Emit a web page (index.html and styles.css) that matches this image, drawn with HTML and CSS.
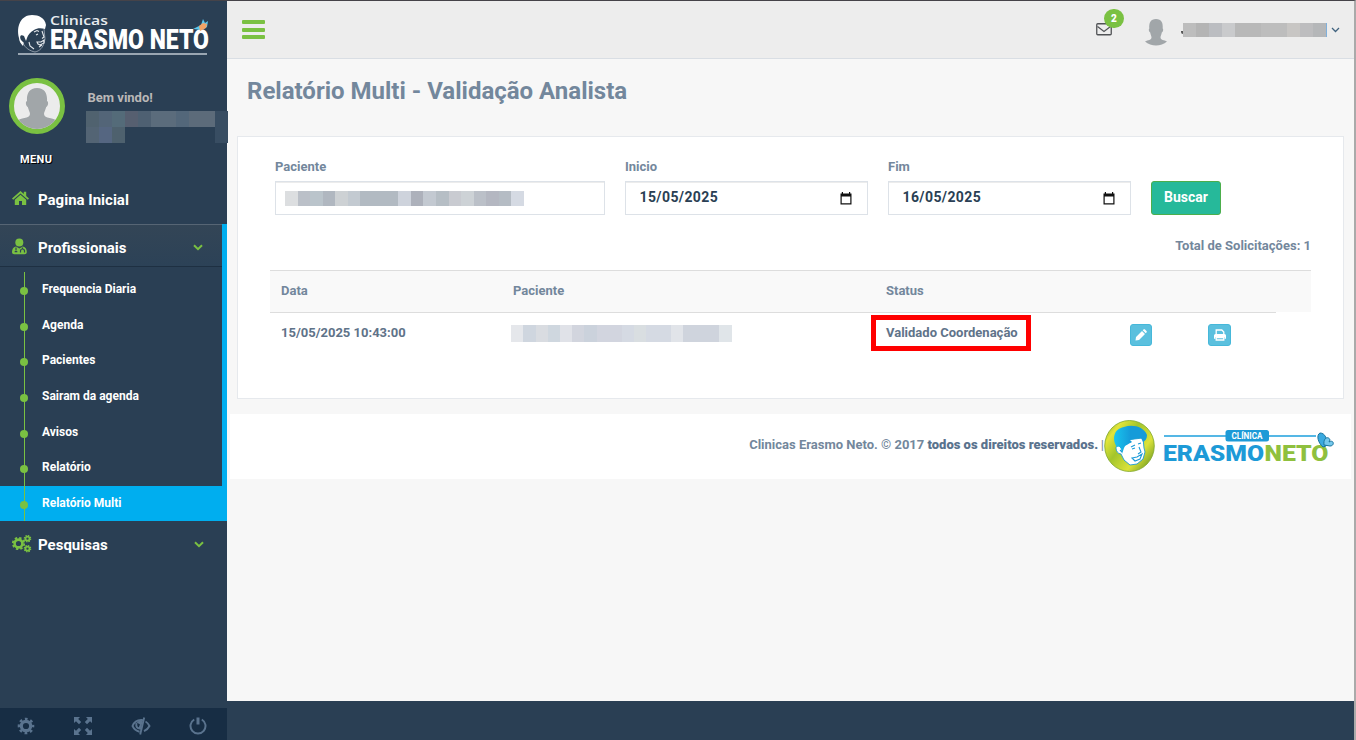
FILE: index.html
```html
<!DOCTYPE html>
<html lang="pt-BR">
<head>
<meta charset="utf-8">
<title>Relatório Multi</title>
<link rel="stylesheet" href="styles.css">
</head>
<body>
<div class="app">
  <aside class="sidebar">
    <div class="brand">
      <svg width="198" height="46" viewBox="0 0 198 46">
        <path d="M2 25C-1 13 4 2 15 2c7 0 13 3 14 10l-1 4c-4-1-8-1-11 1-4 2-6 5-7 8l-1 3-2-5c-3-2-5 0-3 4l3 3-1 3c-2-2-4-5-4-8Z" fill="#fff"/>
        <path d="M6 30c2 5 7 8 12 9 5-1 8-5 9-9l1-4-1-10" fill="none" stroke="#a4afba" stroke-width=".8"/>
        <path d="M17 19l3-1.500 2 1M19 22l2-1M25 18l2 6-2 1.500M20 29l4 0 3-2v3l-4 2-2-1ZM12 29l1 4 4 3M22 34l3-2" fill="none" stroke="#e4e8ec" stroke-width="1.100"/>
        <text class="brand-small" x="33" y="12" textLength="58" lengthAdjust="spacingAndGlyphs">Clinicas</text>
        <text class="brand-large" x="33" y="35.500" textLength="159" lengthAdjust="spacingAndGlyphs">ERASMO NETO</text>
        <path d="M1 41h189" stroke="#9aa6b2" stroke-width="1.800"/>
        <path d="M176 16l8-4 2-6 2 4 3-2-1 6-5 3Z" fill="#5bc8ee"/>
        <path d="M182 13l4-3 4 1-1 4-6 3Z" fill="#f3a365"/>
      </svg>
    </div>
    <div class="profile">
      <div class="avatar">
        <svg width="46" height="46" viewBox="0 0 46 46"><path d="M23 5c8 0 10.500 6 10 13 2 1 1 5-.8 6-.7 3-2.200 5-2.200 7 0 5 10 3 14 8v8H2v-8c4-5 14-3 14-8 0-2-1.500-4-2.200-7-1.800-1-2.800-5-.8-6C12.500 11 15 5 23 5Z" fill="#a1a6a9"/></svg>
      </div>
      <div class="welcome">
        <span>Bem vindo!</span>
        <div class="mask mask-profile"></div>
        <div class="mask mask-profile-2"></div>
      </div>
    </div>
    <h3 class="menu-title">MENU</h3>
    <nav>
      <a class="item home">
        <svg class="item-icon" width="18" height="16" viewBox="0 0 18 16"><path d="M8.500 0 0 7.500l1.200 1.300 7.300-6.300 7.300 6.300L17 7.500l-2.800-2.600V.7h-2.400v2.200Z"/><path d="m2.800 8.700 5.700-5 5.700 5V14h-4.200v-4H7v4H2.800Z"/></svg>
        <span>Pagina Inicial</span>
      </a>
      <div class="group">
        <a class="item open">
          <svg class="item-icon" width="16" height="18" viewBox="0 0 16 18"><circle cx="7.300" cy="4.500" r="4"/><path d="M4 8.500C1 9 0 11.500 0 14c0 1.500 1 2.200 2.200 2.200h10.400c1.200 0 2.200-.7 2.200-2.200 0-2.500-1-5-4-5.500l-3.400 2Z"/><path d="M4 9.500v3m6.500-3v2M8.500 14.500V13a2 2 0 0 1 4 0v1.500M2.700 13.700h2.600" fill="none" stroke="#304357" stroke-width="1.200"/></svg>
          <span>Profissionais</span>
          <svg class="chevron" width="10" height="7" viewBox="0 0 10 7"><path d="m1 1.200 4 4 4-4"/></svg>
        </a>
        <ul class="submenu">
          <li>Frequencia Diaria</li>
          <li>Agenda</li>
          <li>Pacientes</li>
          <li>Sairam da agenda</li>
          <li>Avisos</li>
          <li>Relatório</li>
          <li class="current">Relatório Multi</li>
        </ul>
      </div>
      <a class="item search">
        <svg class="item-icon" width="20" height="18" viewBox="0 0 20 18">
          <g fill="none" stroke="#7ac142"><circle cx="6.500" cy="8.500" r="3.900" stroke-width="2.600"/><circle cx="6.500" cy="8.500" r="5.700" stroke-width="1.800" stroke-dasharray="2.400 2.077"/><circle cx="15.500" cy="3.700" r="2" stroke-width="1.700"/><circle cx="15.500" cy="3.700" r="3.200" stroke-width="1.200" stroke-dasharray="1.400 1.113"/><circle cx="15.500" cy="13.700" r="2" stroke-width="1.700"/><circle cx="15.500" cy="13.700" r="3.200" stroke-width="1.200" stroke-dasharray="1.400 1.113"/></g>
        </svg>
        <span>Pesquisas</span>
        <svg class="chevron" width="10" height="7" viewBox="0 0 10 7"><path d="m1 1.200 4 4 4-4"/></svg>
      </a>
    </nav>
    <div class="tools">
      <span><svg width="18" height="18" viewBox="0 0 18 18"><g fill="none" stroke="#5a738e"><circle cx="9" cy="9" r="4.700" stroke-width="3.200"/><circle cx="9" cy="9" r="7" stroke-width="2.600" stroke-dasharray="2.700 2.798" stroke-dashoffset="1.350"/></g></svg></span>
      <span><svg width="18" height="18" viewBox="0 0 18 18"><path d="M0 0h6L4.200 2l3 3L5 7.200l-3-3L0 6ZM18 0v6l-2-1.800-3 3L10.800 5l3-3L12 0ZM0 18v-6l2 1.800 3-3L7.200 13l-3 3L6 18ZM18 18h-6l1.800-2-3-3 2.200-2.200 3 3L18 12Z" fill="#5a738e"/></svg></span>
      <span><svg width="20" height="18" viewBox="0 0 20 18"><path d="M11.500 3C6 2.500 3 5 1.500 9c1.500 3 4 5 7 5.700M14.500 4.500c2 1 3 2.500 4 4.500-1 2-3 4-5.500 5.200M13.200 .5 9.200 17.500M5.500 6c-1 4 1 6 4.200 5.500" fill="none" stroke="#5a738e" stroke-width="1.900"/><path d="M5 5 12 2.500l-1.500 6.500-1 3-2-1.200L9 7.500Z" fill="#5a738e"/></svg></span>
      <span><svg width="18" height="18" viewBox="0 0 18 18"><path d="M5.200 2.500a7.500 7.500 0 1 0 7.600 0" fill="none" stroke="#5a738e" stroke-width="2"/><path d="M9 .5v7" stroke="#5a738e" stroke-width="3"/></svg></span>
    </div>
  </aside>

  <main class="main">
    <header class="topbar">
      <div class="burger"><i></i><i></i><i></i></div>
      <div class="mail">
        <svg width="16" height="13" viewBox="0 0 16 13"><rect x=".75" y=".75" width="14.500" height="11" rx="1" fill="none" stroke="#515356" stroke-width="1.300"/><path d="m1.500 3.500 6.500 5 6.500-5" fill="none" stroke="#515356" stroke-width="1.200"/></svg>
        <b class="badge">2</b>
      </div>
      <svg class="user-pic" width="22" height="27" viewBox="0 0 22 27"><path d="M11 0c5.500 0 7.200 4 6.700 9.500 1 .8.400 3.300-.9 4-.5 2.500-1.300 3.500-1.300 5C15.500 21 19 21 22 22.500 19 25 15 26.500 11 26.500S3 25 0 22.500C3 21 6.500 21 6.500 18.500c0-1.500-.8-2.500-1.300-5-1.300-.7-1.900-3.200-.9-4C3.800 4 5.500 0 11 0Z" fill="#a1a6a9"/></svg>
      <div class="mask mask-user"></div>
      <svg class="user-caret" width="9" height="6" viewBox="0 0 9 6"><path d="m1 1 3.500 3.500L8 1" fill="none" stroke="#41637f" stroke-width="1.300"/></svg>
    </header>

    <h1>Relatório Multi - Validação Analista</h1>

    <section class="panel">
      <form class="filters">
        <label class="field wide">Paciente<span class="box"><span class="mask mask-patient"></span></span></label>
        <label class="field">Inicio<span class="box date">15/05/2025<svg width="12" height="13" viewBox="0 0 12 13"><path d="M.5 1.500h1.300V0H3v1.500h6V0h1.200v1.500h1.300v11H.5ZM1.700 4.500v6.800h8.600V4.500Z" fill="#111" fill-rule="evenodd"/></svg></span></label>
        <label class="field">Fim<span class="box date">16/05/2025<svg width="12" height="13" viewBox="0 0 12 13"><path d="M.5 1.500h1.300V0H3v1.500h6V0h1.200v1.500h1.300v11H.5ZM1.700 4.500v6.800h8.600V4.500Z" fill="#111" fill-rule="evenodd"/></svg></span></label>
        <button type="button">Buscar</button>
      </form>
      <p class="total">Total de Solicitações: 1</p>
      <div class="row head"><span>Data</span><span>Paciente</span><span>Status</span></div>
      <div class="row data">
        <span class="when">15/05/2025 10:43:00</span>
        <span class="mask mask-row"></span>
        <span class="status">Validado Coordenação</span>
        <a class="action"><svg width="12" height="12" viewBox="0 0 12 12"><path d="M1 8 7 2l3 3-6 6-3.500.5ZM7.700 1.300l.8-.8c.5-.5 1-.5 1.500 0l1.500 1.500c.5.500.5 1 0 1.500l-.8.800Z" fill="#fff"/></svg></a>
        <a class="action print"><svg width="12" height="12" viewBox="0 0 12 12"><path d="M2.200 5.500V1h5.600l2 2v2.500M2.200 8.500h7.600V11H2.200Z" fill="none" stroke="#fff" stroke-width="1.300"/><path d="M0 9.800V6.500Q0 5 1.500 5h9Q12 5 12 6.500v3.300h-1.500V8h-9v1.800Z" fill="#fff"/></svg></a>
      </div>
    </section>

    <footer class="credits">
      <p>Clinicas Erasmo Neto. © 2017 <b>todos os direitos reservados.</b> <i>|</i></p>
      <svg width="232" height="54" viewBox="0 0 232 54">
        <defs>
          <linearGradient id="disc" x1="0" y1="0" x2="1" y2=".8"><stop offset="0" stop-color="#6e9e20"/><stop offset=".22" stop-color="#e2e53a"/><stop offset=".45" stop-color="#a3c52c"/><stop offset=".75" stop-color="#dbe23a"/><stop offset="1" stop-color="#759f22"/></linearGradient>
          <linearGradient id="hair"><stop offset="0" stop-color="#18c5ee"/><stop offset=".5" stop-color="#159bd9"/></linearGradient>
        </defs>
        <ellipse cx="25.500" cy="27" rx="24.800" ry="25.500" fill="url(#disc)" stroke="#7fa62a" stroke-width=".8"/>
        <path d="M12 29c0-3 4-3 5 0l4-8 18-2 1 10 1 4-2 7-6 5-7 1-6-5-3-6c-3 0-5-3-5-6Z" fill="#fff" stroke="#1b9ad8" stroke-width=".9"/>
        <path d="M13 28C8 21 9 10 20 8c9-3 20 0 23 8 0 4-2 6-4 7l-2-4c-5 1-8 1-11 2l2 2c-3 2-7 3-8 6l-2 6-1-5c-1-3-3-3-4-2Z" fill="url(#hair)"/>
        <path d="m27 28 4-2m3-1 3-1m-9 6 3-1m4-1 2 5-3 2M28 39l5-1 5-3-2 5-5 2Zm-12-8 2 2" fill="none" stroke="#1b9ad8" stroke-width="1.100"/>
        <path d="M60 17h152" stroke="#55b7e5" stroke-width="2"/>
        <rect x="121.500" y="11" width="43.500" height="11.500" rx="2.500" fill="#1d9ad7"/>
        <text class="clinic-tag" x="127.500" y="19.800" textLength="31" lengthAdjust="spacingAndGlyphs">CLÍNICA</text>
        <text class="clinic-name blue" x="59" y="42" textLength="101" lengthAdjust="spacingAndGlyphs">ERASMO</text>
        <text class="clinic-name green" x="160.500" y="42" textLength="64" lengthAdjust="spacingAndGlyphs">NETO</text>
        <g fill="#3aa9df" stroke="#18749e"><path d="M219 28c-5-4-7-12-3-14 5 0 8 6 6 13Z"/><path d="M220 26c-1-8 5-9 6-5l-1 2c5-3 6 4 1 4Z" fill="#75c8ec"/></g>
      </svg>
    </footer>
    <div class="bottom"></div>
  </main>
</div>
</body>
</html>
```
FILE: styles.css
```css
* { box-sizing: border-box; }
body { margin: 0; font: 700 13px/18px Roboto, sans-serif; color: #73879c; background: #f7f7f7; overflow: hidden; }
h1, h3, p, ul { margin: 0; padding: 0; }
svg { display: block; flex: none; }
.app { display: grid; grid-template-columns: 227px 1fr; width: 1356px; height: 740px; border-top: 1px solid #454349; border-right: 2px solid #aaa; }

.sidebar { display: flex; flex-direction: column; background: #2a3f54; color: #fff; min-width: 0; }
.brand { height: 77px; padding: 12px 0 0 17px; }
.brand svg { overflow: visible; }
.brand-small { font: 600 12.5px "Open Sans", sans-serif; fill: #e8ecef; }
.brand-large { font: 900 27px Roboto, sans-serif; fill: #fff; }
.profile { position: relative; display: flex; height: 72px; padding-left: 9px; }
.avatar { flex: none; width: 56px; height: 56px; border: 5px solid #7ac142; border-radius: 50%; overflow: hidden; background: #ececec; }
.welcome { flex: none; width: 142px; margin-left: 21px; padding-top: 11px; color: #bab8b8; }
.welcome > span { display: block; height: 22px; padding-left: 1.5px; }
.mask { display: block; }
.mask-profile { height: 16px; background: linear-gradient(90deg, #50626f 0 13px, #536578 13px 26px, #546b79 26px 39px, #565f70 39px 52px, #4e6072 52px 65px, #5b6c7c 65px 90px, #53677a 90px 103px, #5c6b7a 103px 129px, #384d62 129px); }
.mask-profile-2 { height: 16px; background: linear-gradient(90deg, #536474 0 13px, #556681 13px 26px, #4e616e 26px 39px, #2a3f54 39px 129px, #384d62 129px); }
.menu-title { height: 25px; padding: 1px 0 0 20px; font: 700 11px/18px Roboto, sans-serif; letter-spacing: .4px; text-shadow: 1px 1px #000; }
.item { display: flex; align-items: center; font-size: 15px; line-height: 20px; }
.item span { width: 155px; }
.item-icon { margin-right: 8px; fill: #7ac142; }
.home { height: 49px; padding-left: 12px; }
.home .item-icon { margin-top: -1px; }
.open .item-icon { margin-right: 10px; margin-top: -1px; }
.search .item-icon { margin-right: 6px; margin-top: -2px; }
.group { border-right: 5px solid #00aeef; }
.open { height: 43px; padding: 4px 0 0 12px; background: linear-gradient(#334556, #2c4257); border-top: 1px solid #566574; border-bottom: 1px solid #1e3042; }
.open .chevron { margin-top: -1px; }
.chevron { fill: none; stroke: #7ac142; stroke-width: 2; }
.search .chevron { margin: -2px 0 0 1px; }
.submenu { list-style: none; padding-top: 5px; font-size: 12px; }
.submenu li { position: relative; height: 35.7px; padding: 8px 0 0 42px; }
.submenu li::before { content: ""; position: absolute; left: 24px; top: 0; bottom: 0; width: 1px; background: #7ac142; }
.submenu li::after { content: ""; position: absolute; left: 20px; top: 15px; width: 8px; height: 8px; border-radius: 50%; background: #7ac142; }
.submenu .current { margin-right: -5px; height: 35px; background: #00aeef; }
.search { height: 48px; padding-left: 12px; }
.tools { display: grid; grid-template-columns: repeat(4, 57.5px); height: 32px; margin-top: auto; overflow: hidden; background: #172d44; }
.tools span { display: flex; justify-content: center; padding: 9px 6px 0 0; }

.main { display: flex; flex-direction: column; min-width: 0; }
.topbar { display: flex; height: 58px; background: #ededed; border-bottom: 1px solid #d9dee4; }
.burger { display: grid; gap: 3.5px; width: 23px; height: 19px; margin: 19px 0 0 15px; }
.burger i { background: #7ac142; border-radius: 1px; height: 4px; }
.mail { position: relative; margin: 22px 0 0 831px; }
.badge { position: absolute; left: 8px; top: -14px; width: 20px; height: 19px; border-radius: 10px; background: #7ac142; color: #fff; text-align: center; font-size: 10px; line-height: 19px; }
.user-pic { margin: 18px 0 0 33px; }
.mask-user { position: relative; width: 145px; height: 14px; margin: 22px 0 0 16px; background: linear-gradient(90deg, #bdbdbd 0 13px, #b4b4b4 13px 26px, #bbbdc1 26px 39px, #c9cacc 39px 52px, #b8b8b8 52px 78px, #bdbdbd 78px 104px, #c8c6c4 104px 117px, #bdbdbf 117px 130px, #b5b7b9 130px 143px, #7fb0dc 143px 144px, #ededed 144px); }
.mask-user::before { content: ""; position: absolute; left: -2px; top: 8px; width: 2px; height: 3px; border-radius: 0 0 0 2px; background: #555; }
.user-caret { margin: 26px 0 0 3px; }
h1 { height: 77px; padding: 14px 0 0 20px; font-size: 24px; line-height: 36px; white-space: nowrap; }
.panel { height: 263px; margin: 0 10px; padding: 21px 32px 0; background: #fff; border: 1px solid #e6e9ed; }
.filters { display: flex; padding-left: 5px; height: 79px; }
.field { width: 243px; margin-right: 20px; }
.wide { width: 330px; }
.box { display: flex; align-items: center; height: 34px; margin-top: 5px; padding: 1px 9px 0; border: 1px solid #dde2e8; box-shadow: inset 0 1px #ececec; }
.date { justify-content: space-between; padding: 0 15px 2px 13.5px; font-size: 14px; letter-spacing: .4px; color: #2a3f54; }
.date svg { margin-top: 2px; }
button { width: 70px; height: 34px; margin-top: 23px; padding: 0 0 2px; border: 1px solid #4cae4c; border-radius: 3px; background: #26b99a; color: #fff; font: 700 14px Roboto, sans-serif; }
.mask-patient { width: 239px; height: 15px; background: linear-gradient(90deg, #dcdee0 0 13px, #bbc0c8 13px 25px, #bac4cb 25px 38px, #b0b7c0 38px 50px, #cdd1d4 50px 63px, #c3cad1 63px 75px, #b2bac2 75px 113px, #ced3dc 113px 126px, #adb1bb 126px 138px, #c3c9d1 138px 151px, #b6bec5 151px 164px, #c9cbd1 164px 176px, #cdd2d6 176px 189px, #bbc0c8 189px 201px, #b4b7c1 201px 214px, #b5bcc4 214px 226px, #d5dae3 226px); }
.total { height: 33px; text-align: right; }
.row { display: grid; grid-template-columns: 232px 373px 244px 78px 1fr; padding-left: 11px; }
.head { height: 42px; padding-top: 11px; background: #f9f9f9; border-top: 1px solid #ddd; }
.data { width: 1006px; border-top: 1px solid #ddd; padding-top: 11px; color: #5f7389; }
.mask-row { width: 221px; height: 17px; margin: 1px 0 0 -2px; background: linear-gradient(90deg, #e5e7eb 0 12px, #cfd6df 12px 25px, #d9dce1 25px 37px, #cfd7df 37px 49px, #e0e2e8 49px 61px, #d2d5de 61px 73px, #cbd2dc 73px 86px, #d2d5df 86px 111px, #d5dae3 111px 123px, #d9dee1 123px 135px, #d5dae3 135px 160px, #e1e4e9 160px 172px, #cfd4dd 172px 208px, #e0e5e9 208px); }
.status { width: 160px; height: 36px; margin: -9px 0 0 -15.4px; padding: 4px 0 0 10.4px; border: 5px solid #f00; white-space: nowrap; }
.action { display: flex; align-items: center; justify-content: center; width: 22px; height: 22px; background: #5bc0de; border: 1px solid #46b8da; border-radius: 3px; }
.print { width: 23px; }
.credits { display: flex; justify-content: flex-end; height: 65px; margin: 15px 3px 0; padding: 5px 15px 0 0; background: #fff; }
.credits p { padding-top: 17px; white-space: pre; }
.credits p b { color: #5a738e; }
.credits p i { margin-left: -.5px; font-weight: 400; font-style: normal; }
.clinic-tag { font: 700 9px Roboto, sans-serif; fill: #fff; }
.clinic-name { font: 900 22px Roboto, sans-serif; }
.blue { fill: #1d9ad7; }
.green { fill: #8fc03e; }
.bottom { height: 39px; margin-top: auto; background: #2a3f54; }
```
